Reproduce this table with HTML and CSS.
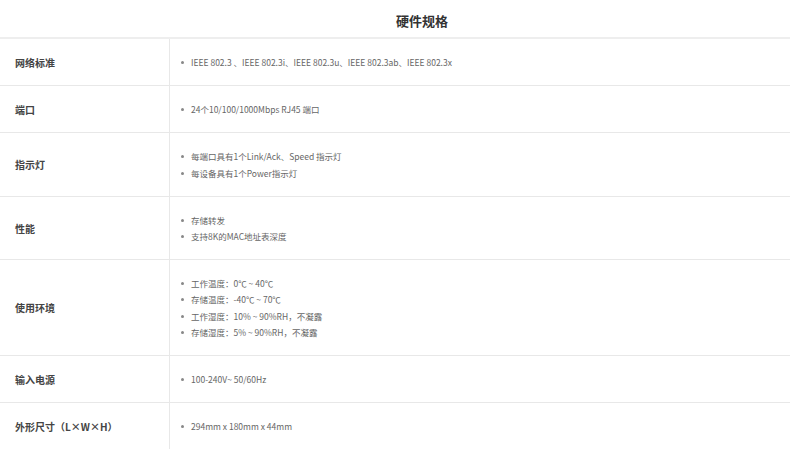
FILE: index.html
```html
<!DOCTYPE html>
<html lang="zh-CN">
<head>
    <meta charset="UTF-8">
    <meta name="viewport" content="width=device-width, initial-scale=1.0">
    <title>硬件规格</title>
    <link rel="stylesheet" href="styles.css">
</head>
<body>
    <div class="specs">
        <h2 class="specs-title">硬件规格</h2>

        <table class="spec-table">
            <tr>
                <th>网络标准</th>
                <td>
                    <ul class="spec-list">
                        <li>IEEE 802.3 、IEEE 802.3i、IEEE 802.3u、IEEE 802.3ab、IEEE 802.3x</li>
                    </ul>
                </td>
            </tr>
            <tr>
                <th>端口</th>
                <td>
                    <ul class="spec-list">
                        <li>24个10/100/1000Mbps RJ45 端口</li>
                    </ul>
                </td>
            </tr>
            <tr>
                <th>指示灯</th>
                <td>
                    <ul class="spec-list">
                        <li>每端口具有1个Link/Ack、Speed 指示灯</li>
                        <li>每设备具有1个Power指示灯</li>
                    </ul>
                </td>
            </tr>
            <tr>
                <th>性能</th>
                <td>
                    <ul class="spec-list">
                        <li>存储转发</li>
                        <li>支持8K的MAC地址表深度</li>
                    </ul>
                </td>
            </tr>
            <tr>
                <th>使用环境</th>
                <td>
                    <ul class="spec-list">
                        <li>工作温度：0℃ ~ 40℃</li>
                        <li>存储温度：-40℃ ~ 70℃</li>
                        <li>工作湿度：10% ~ 90%RH，不凝露</li>
                        <li>存储湿度：5% ~ 90%RH，不凝露</li>
                    </ul>
                </td>
            </tr>
            <tr>
                <th>输入电源</th>
                <td>
                    <ul class="spec-list">
                        <li>100-240V~ 50/60Hz</li>
                    </ul>
                </td>
            </tr>
            <tr>
                <th>外形尺寸（L×W×H）</th>
                <td>
                    <ul class="spec-list">
                        <li>294mm x 180mm x 44mm</li>
                    </ul>
                </td>
            </tr>
        </table>
    </div>
</body>
</html>
```

FILE: styles.css
```css
body {
    font-family: "Noto Sans CJK SC", "Noto Sans", sans-serif;
    margin: 0;
    padding: 0;
    background-color: #ffffff;
    color: #333;
}

.specs-title {
    margin: 0;
    height: 37px;
    line-height: 41px;
    padding-left: 54px;
    text-align: center;
    font-size: 13px;
    font-weight: bold;
    color: #333;
    border-bottom: 2px solid #eeeeee;
}

.spec-table {
    width: 100%;
    border-collapse: collapse;
}

.spec-table th,
.spec-table td {
    border-bottom: 1px solid #e8e8e8;
    padding: 15px 0;
    vertical-align: middle;
}

.spec-table th {
    width: 154px;
    padding-left: 15px;
    text-align: left;
    font-size: 10px;
    font-weight: bold;
    color: #444;
    border-right: 1px solid #e8e8e8;
}

.spec-list {
    list-style: none;
    margin: 0;
    padding: 0 0 0 21px;
}

.spec-list li {
    position: relative;
    font-size: 8.5px;
    line-height: 16.2px;
    color: #666;
}

.spec-list li::before {
    content: "";
    position: absolute;
    left: -10px;
    top: 7px;
    width: 3px;
    height: 3px;
    border-radius: 50%;
    background-color: #888;
}
```
